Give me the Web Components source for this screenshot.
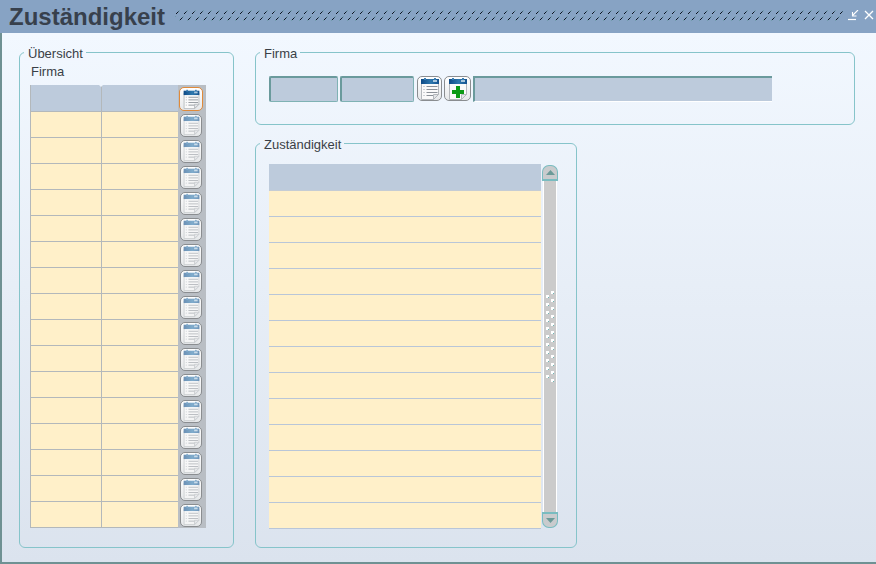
<!DOCTYPE html>
<html><head><meta charset="utf-8">
<style>
html,body{margin:0;padding:0;width:876px;height:564px;overflow:hidden}
body{font-family:"Liberation Sans",Arial,sans-serif}
</style></head>
<body>
<app-window>
  <title-bar slot="title">Zuständigkeit</title-bar>
  <group-box style="--w:215px;--h:496px" label="Übersicht" slot="left">
    <overview-table></overview-table>
  </group-box>
  <div slot="right" style="display:contents">
    <group-box style="--w:600px;--h:73px;--pad:23px 0 0 13px" label="Firma"><firma-form></firma-form></group-box>
    <group-box style="--w:322px;--h:405px;--pad:20px 0 0 13px" label="Zuständigkeit"><resp-table></resp-table></group-box>
  </div>
</app-window>
<script>
const ICON_COUNT={n:0};
function calIcon(kind,dim,size){
  const id='c'+(ICON_COUNT.n++);
  const op=dim?0.6:1;
  const body = kind==='plus'
   ? `<path d="M10 10h4v4h4v4h-4v4h-4v-4H6v-4h4z" fill="#0a9a14"/>`
   : `<g stroke="#8b9198" stroke-width="1" fill="none"><path d="M8.5 10.5h11M8.5 13.5h11M8.5 16.5h11M8.5 19.5h8"/></g><path d="M5.5 10.5h1M5.5 13.5h1M5.5 16.5h1M5.5 19.5h1" stroke="#a5abb2"/>`;
  return `<svg width="${size}" height="${Math.round(size*25/24)}" viewBox="0 0 24 25" aria-hidden="true">
  <defs><linearGradient id="${id}" x1="0" y1="0" x2="1" y2="0"><stop offset="0" stop-color="#0e4a86"/><stop offset=".55" stop-color="#2e78ae"/><stop offset="1" stop-color="#14528f"/></linearGradient></defs>
  <g opacity="${op}">
  <path d="M3.5 5.5h17v13l-5 5h-12z" fill="#fafafa" stroke="#b4b8bc"/>
  <rect x="3" y="3" width="18" height="5" fill="url(#${id})"/>
  <rect x="6" y="2" width="2" height="2" fill="#3d7fb3"/><rect x="16" y="2" width="2" height="2" fill="#3d7fb3"/>
  <rect x="15" y="4" width="4" height="2" fill="#a8c6dc"/>
  ${body}
  <path d="M15.5 23.5v-5h5z" fill="#e3e5e8" stroke="#b4b8bc"/>
  </g></svg>`;
}
class AppWindow extends HTMLElement{constructor(){super();this.attachShadow({mode:'open'}).innerHTML=`<style>
:host{display:flex;flex-direction:column;box-sizing:border-box;width:876px;height:564px;border-left:2px solid #6f9193;border-bottom:2px solid #6f9193;background:linear-gradient(#f2f8ff 33px,#dbe3ee 100%)}
.bar{margin-left:-2px}
.main{display:flex;gap:21px;padding:19px 0 0 17px}
.r{display:flex;flex-direction:column;gap:18px}
</style><div class="bar"><slot name="title"></slot></div><div class="main"><slot name="left"></slot><div class="r"><slot name="right"></slot></div></div>`}}
class TitleBar extends HTMLElement{constructor(){super();this.attachShadow({mode:'open'}).innerHTML=`<style>
:host{display:flex;align-items:flex-start;height:33px;background:#87a3c4;color:#37404c}
h1{margin:0;padding:2px 0 0 9px;font:700 24px/29px "Liberation Sans",Arial,sans-serif;width:166px;white-space:nowrap}
svg{display:block}
.dots{margin:10px 0 0 0;flex:none}
.ctl{margin:10px 0 0 5px;flex:none}
</style><h1><slot></slot></h1>
<svg class="dots" width="668" height="11" shape-rendering="crispEdges"><defs><pattern id="d" width="8" height="10" patternUnits="userSpaceOnUse">
<path d="M1 3h1v1H1zM2 2h1v1H2z" fill="#0c1420"/><path d="M3 1h1v1H3z" fill="#3a5a6a"/><path d="M4 0h1v1H4z" fill="#6f9aaa"/>
<path d="M5 9h1v1H5zM6 8h1v1H6z" fill="#0c1420"/><path d="M7 7h1v1H7z" fill="#3a5a6a"/><path d="M0 6h1v1H0z" fill="#6f9aaa"/>
</pattern></defs><rect width="668" height="11" fill="url(#d)"/></svg>
<svg class="ctl" width="28" height="11" viewBox="0 0 28 11" fill="none" stroke="#fff"><path d="M0 9.5h8" stroke-width="1.2"/><path d="M10 0L4.5 5.5M4.5 2v4h4" stroke-width="1.1"/><path d="M17 1l8 8M25 1l-8 8" stroke-width="1.3"/></svg>`}}
class GroupBox extends HTMLElement{constructor(){super();this.attachShadow({mode:'open'}).innerHTML=`<style>
:host{display:block;flex:none;width:var(--w);height:var(--h);position:relative;box-sizing:border-box;border:1px solid #86c4ca;border-radius:6px;font:13px/15px "Liberation Sans",Arial,sans-serif;color:#3a3f46}
.lg{position:absolute;left:4px;top:-7px;padding:0 3px 0 4px;background:linear-gradient(transparent 6px,#f1f6fe 6px);white-space:nowrap}
.c{padding:var(--pad,0)}
</style><div class="lg">${this.getAttribute('label')}</div><div class="c"><slot></slot></div>`;
 if(this.getAttribute('label')==='Zuständigkeit')this.shadowRoot.querySelector('.lg').style.background='linear-gradient(transparent 6px,#eef3fb 6px)';
}}
class ToolBtn extends HTMLElement{constructor(){super();const k=this.getAttribute('kind');const a=this.hasAttribute('active');const d=this.hasAttribute('dim');
const w=this.getAttribute('w')||24,h=this.getAttribute('h')||24,s=this.getAttribute('s')||24;
this.attachShadow({mode:'open'}).innerHTML=`<style>
:host{display:flex;align-items:center;justify-content:center;box-sizing:border-box;flex:none;width:${w}px;height:${h}px;border:1px solid ${a?'#e08a3a':'#8a8d90'};border-radius:5px;background:linear-gradient(#ffffff,#e6e8ea);overflow:hidden}
svg{display:block;flex:none;margin-top:-1px}
</style>${calIcon(k,d,s)}`}}
class OverviewTable extends HTMLElement{constructor(){super();
 let rows='';
 for(let i=0;i<17;i++){rows+=`<div class="row ${i==0?'h':''}"><div class="a"></div><div class="b"></div><div class="x">${i==0?'<tool-btn kind="list" active w="24" h="24" s="21" style="margin:2px 0 0 1px"></tool-btn>':'<tool-btn kind="list" dim w="22" h="23" s="21" style="margin:2px 0 0 2px"></tool-btn>'}</div></div>`}
 this.attachShadow({mode:'open'}).innerHTML=`<style>
:host{display:block;padding:12px 0 0 10px}
.t{padding:0 0 6px 1px;font:13px/14px "Liberation Sans",Arial,sans-serif;height:14px;color:#3a3f46}
.g{width:176px}
.row{display:grid;grid-template-columns:71px 77px 28px;height:26px}
.row.h{height:27px}
.a,.b{box-sizing:border-box;background:#fff0c9;border-bottom:1px solid #b3b8bb;border-left:1px solid #b3b8bb;position:relative}
.h .a,.h .b{background:#bdcbdc}
.h .b::before{content:"";position:absolute;left:-3px;top:0;border:2px solid transparent;border-top-color:#eef4fc;border-bottom:0}
.x{background:#b9bec4;display:flex;align-items:flex-start;overflow:hidden}
</style><div class="t">Firma</div><div class="g">${rows}</div>`}}
class FirmaForm extends HTMLElement{constructor(){super();this.attachShadow({mode:'open'}).innerHTML=`<style>
:host{display:flex;gap:2px;align-items:flex-start}
i{display:block;box-sizing:border-box;height:26px;background:#bdcbdc;border:1px solid #7fb2b4;border-top:2px solid #6a9a9c;border-left:2px solid #6a9a9c;border-radius:2px}
.f{border-color:#6a9a9c transparent #fff #6a9a9c;border-right:0;border-bottom:1px solid #fff;border-radius:0}
</style><i style="width:69px"></i><i style="width:74px"></i><tool-btn kind="list" w="25" h="25" s="24" style="margin-left:1px"></tool-btn><tool-btn kind="plus" w="27" h="25" s="24"></tool-btn><i class="f" style="width:299px;margin-left:0"></i>`}}
class RespTable extends HTMLElement{constructor(){super();
 let rows='';for(let i=0;i<14;i++)rows+=`<div class="r ${i==0?'h':''}"></div>`;
 let pts='';for(let i=0;i<12;i++){
   if(i<11)pts+=`<path d="M1 ${i*8+5}h3v2h-1v1H1z" fill="#fff"/><rect x="3" y="${i*8+7}" width="1" height="1" fill="#6fb6b6"/>`;
   pts+=`<path d="M6 ${i*8+1}h3v2h-1v1H6z" fill="#fff"/><rect x="8" y="${i*8+3}" width="1" height="1" fill="#6fb6b6"/>`}
 this.attachShadow({mode:'open'}).innerHTML=`<style>
:host{display:flex;gap:1px;height:364px;align-items:flex-start}
.t{width:272px}
.r{box-sizing:border-box;height:26px;background:#fff0c9;border-bottom:1px solid #b9c6d8}
.h{background:#bdcbdc;height:27px;border:0;border-bottom:1px solid #c5ccd4}
.s{width:16px;height:363px;margin-top:1px;display:flex;flex-direction:column}
.btn{box-sizing:border-box;width:16px;height:16px;background:#c9cbcd;border:1px solid #79bcc0;display:flex;align-items:center;justify-content:center;flex:none}
.u{border-radius:7px 7px 0 0;border-bottom:2px solid #79bcc0}.d{border-radius:0 0 7px 7px;border-top:2px solid #79bcc0}
.tr{flex:1;margin:0 1px;background:#cbcbcb;border-left:1px solid #fff;border-right:1px solid #fff;display:flex;justify-content:center;align-items:flex-start}
svg{display:block}
.gr{margin-top:109px}
</style><div class="t">${rows}</div><div class="s"><div class="btn u"><svg width="9" height="5"><path d="M4.5 0l4.5 5H0z" fill="#6b9a98"/></svg></div><div class="tr"><svg class="gr" width="10" height="100" shape-rendering="crispEdges">${pts}</svg></div><div class="btn d"><svg width="9" height="5"><path d="M0 0h9L4.5 5z" fill="#6b9a98"/></svg></div></div>`}}
customElements.define('tool-btn',ToolBtn);
customElements.define('app-window',AppWindow);
customElements.define('title-bar',TitleBar);
customElements.define('group-box',GroupBox);
customElements.define('overview-table',OverviewTable);
customElements.define('firma-form',FirmaForm);
customElements.define('resp-table',RespTable);
</script>
</body></html>
